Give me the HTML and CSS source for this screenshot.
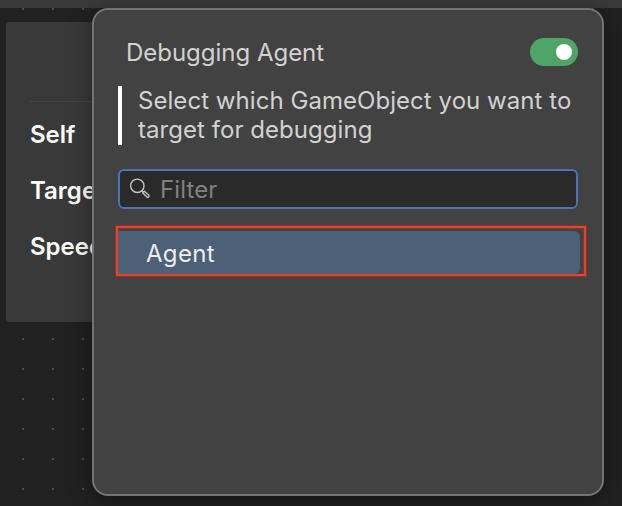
FILE: index.html
```html
<!DOCTYPE html>
<html lang="en">
<head>
<meta charset="utf-8">
<title>Debugging Agent</title>
<link rel="stylesheet" href="styles.css">
</head>
<body>
<div class="toolbar"></div>
<main class="canvas">
  <section class="blackboard">
    <header class="blackboard-head"></header>
    <div class="variable">Self</div>
    <div class="variable">Target</div>
    <div class="variable">Speed</div>
  </section>
</main>
<aside class="popover">
  <header class="head">
    <h1 class="title">Debugging Agent</h1>
    <span class="toggle"><span class="knob"></span></span>
  </header>
  <p class="hint">Select which GameObject you want to<br>target for debugging</p>
  <div class="search">
    <svg class="search-icon" viewBox="0 0 22 22" width="22" height="22">
      <circle cx="8.3" cy="7.8" r="6.7"/>
      <path d="M12.8 12.8l1.5 1.5M13.8 14.9l1.5-1.6 4.3 3.8a1.2 1.2 0 0 1-1.7 1.9z"/>
    </svg>
    <span class="placeholder">Filter</span>
  </div>
  <div class="highlight">
    <div class="option">Agent</div>
  </div>
</aside>
</body>
</html>
```
FILE: styles.css
```css
* { box-sizing: border-box; }

body {
  margin: 0;
  width: 622px;
  height: 506px;
  overflow: hidden;
  background: #212121;
  font-family: Inter, sans-serif;
  font-size: 24px;
  color: #d2d2d2;
}

.toolbar { height: 8px; background: #3a3a3a; }

.canvas {
  height: 498px;
  padding: 14px 0 0 6px;
  background: conic-gradient(from 270deg at 2px 2px, #4c4c4c 90deg, transparent 0) 22px 0 / 30px 30px;
}

.blackboard {
  width: 200px;
  height: 300px;
  padding: 0 24px;
  border-radius: 4px;
  background: #393939;
}

.blackboard-head {
  height: 80px;
  margin-bottom: 5px;
  border-bottom: 1px solid #454545;
}

.variable {
  height: 56px;
  line-height: 56px;
  font-weight: 600;
  color: #fff;
}

.popover {
  position: absolute;
  left: 92px;
  top: 8px;
  width: 512px;
  height: 488px;
  padding: 28px 24px 0;
  border: 2px solid #747474;
  border-radius: 16px;
  background: #424242;
  box-shadow: 0 4px 24px rgba(0, 0, 0, 0.4);
}

.head {
  display: flex;
  align-items: center;
  justify-content: space-between;
  height: 28px;
  padding-left: 8px;
}

.title {
  margin: 0;
  font-size: 24px;
  font-weight: 400;
  letter-spacing: -0.02px;
}

.toggle {
  display: flex;
  align-items: center;
  justify-content: flex-end;
  width: 48px;
  height: 28px;
  padding: 6px;
  border-radius: 14px;
  background: #4fa567;
}

.knob { width: 16px; height: 16px; border-radius: 50%; background: #fff; }

.hint {
  height: 59px;
  margin: 20px 0 24px;
  padding-left: 16px;
  border-left: 4px solid #fff;
  line-height: 29px;
  letter-spacing: 0.05px;
  white-space: nowrap;
}

.search {
  display: flex;
  align-items: center;
  width: 460px;
  height: 40px;
  padding-left: 9px;
  border: 2px solid #4676b5;
  border-radius: 6px;
  background: #2a2a2a;
}

.search-icon {
  fill: none;
  stroke: #c4c4c4;
  stroke-width: 1.4;
}

.placeholder { margin-left: 9px; color: #808080; letter-spacing: 0.1px; }

.highlight {
  width: 470px;
  height: 50px;
  margin: 17px 0 0 -2px;
  padding: 3px 4px 0 0;
  border: 2px solid #f04023;
  box-shadow: 0 0 0 1px rgba(200, 50, 30, 0.4), inset 0 0 0 1px rgba(200, 50, 30, 0.4);
}

.option {
  height: 43px;
  padding-left: 28px;
  border-radius: 0 6px 6px 0;
  background: #4c6078;
  line-height: 46px;
  letter-spacing: 0.3px;
  color: #eee;
}
```
